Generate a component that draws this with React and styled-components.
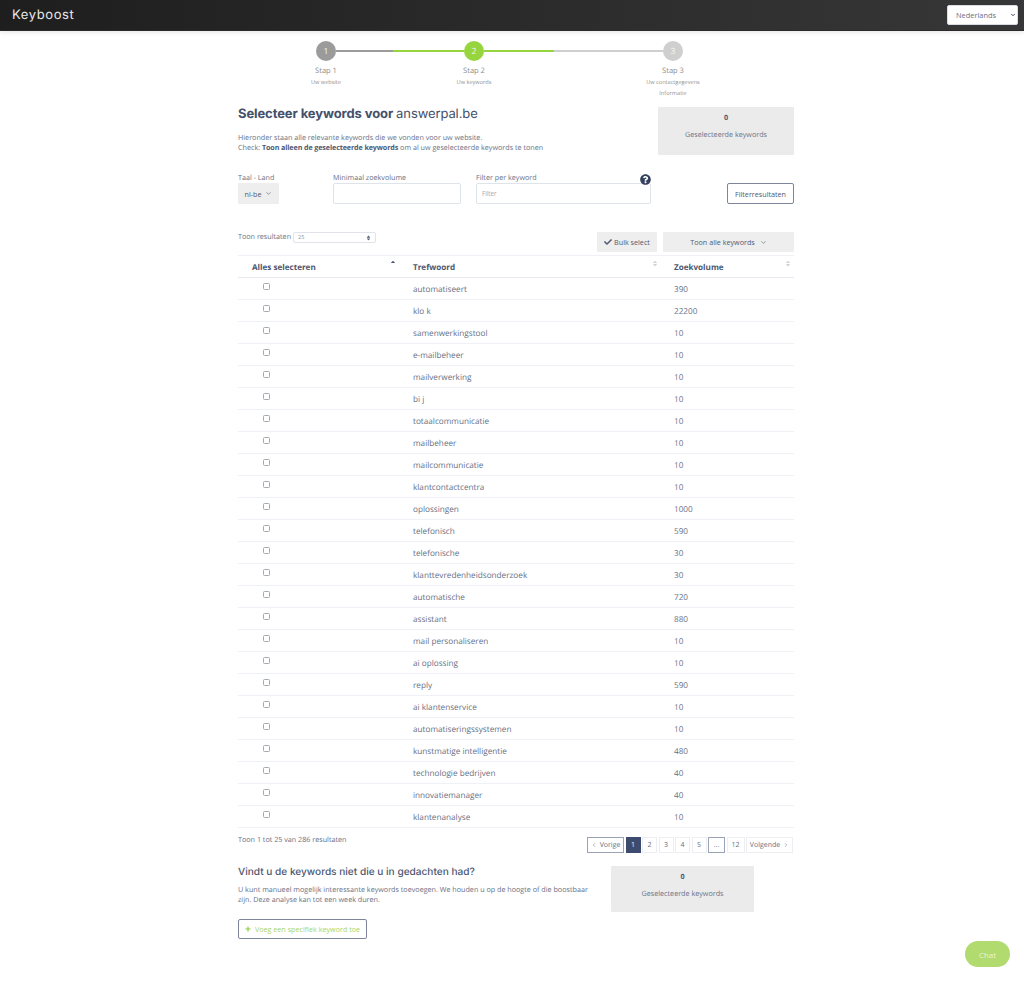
import React from "react";
import styled, { createGlobalStyle } from "styled-components";
import { FaCheck, FaPlus, FaQuestionCircle, FaSort, FaSortUp } from "react-icons/fa";
import { FiChevronDown, FiChevronLeft, FiChevronRight } from "react-icons/fi";

const HEADING = '"Inter", "Noto Sans", sans-serif';

const keywords = [
  ["automatiseert", 390],
  ["klo k", 22200],
  ["samenwerkingstool", 10],
  ["e-mailbeheer", 10],
  ["mailverwerking", 10],
  ["bi j", 10],
  ["totaalcommunicatie", 10],
  ["mailbeheer", 10],
  ["mailcommunicatie", 10],
  ["klantcontactcentra", 10],
  ["oplossingen", 1000],
  ["telefonisch", 590],
  ["telefonische", 30],
  ["klanttevredenheidsonderzoek", 30],
  ["automatische", 720],
  ["assistant", 880],
  ["mail personaliseren", 10],
  ["ai oplossing", 10],
  ["reply", 590],
  ["ai klantenservice", 10],
  ["automatiseringssystemen", 10],
  ["kunstmatige intelligentie", 480],
  ["technologie bedrijven", 40],
  ["innovatiemanager", 40],
  ["klantenanalyse", 10],
];

const GlobalStyle = createGlobalStyle`
  html, body {
    margin: 0;
    background: #fff;
    font-family: "Open Sans", "Noto Sans", sans-serif;
    color: #687085;
    text-rendering: geometricPrecision;
  }
`;

const Page = styled.div`
  min-height: 982px;
  position: relative;
`;

const TopBar = styled.header`
  height: 31px;
  box-sizing: border-box;
  padding: 0 6px 0 12px;
  display: flex;
  align-items: center;
  justify-content: space-between;
  background: linear-gradient(90deg, #1e1e1e, #373737);
  border-bottom: 1px solid #2a2a2a;
  box-shadow: 0 1px 5px rgba(0, 0, 0, 0.12);
`;

const Logo = styled.div`
  font-family: ${HEADING};
  font-size: 13px;
  font-weight: 400;
  letter-spacing: 0.6px;
  color: #e8e8e8;
`;

const LangWrap = styled.div`
  position: relative;
  width: 71px;
  height: 20px;
  svg {
    position: absolute;
    top: 7px;
    right: 2px;
    width: 6px;
    height: 6px;
    stroke-width: 4;
    color: #3d4c6e;
    pointer-events: none;
  }
`;

const LangSelect = styled.select`
  appearance: none;
  display: block;
  width: 100%;
  height: 100%;
  padding: 0 0 0 8px;
  border: 1px solid #d8dce4;
  border-radius: 2px;
  background: #fff;
  color: #667089;
  font-family: inherit;
  font-size: 7.4px;
`;

const Content = styled.main`
  width: 556px;
  margin-left: 238px;
`;

const StepTrack = styled.div`
  display: flex;
  align-items: center;
  margin: 10px 0 0 78px;
`;

const StepCircle = styled.div`
  width: 20px;
  height: 20px;
  flex: none;
  border-radius: 50%;
  display: flex;
  align-items: center;
  justify-content: center;
  background: ${(p) => p.$color};
  color: #f4f4f4;
  font-size: 8.5px;
`;

const StepLine = styled.div`
  height: 2px;
  width: ${(p) => p.$width}px;
  background: ${(p) => p.$color};
`;

const StepLabels = styled.div`
  display: flex;
  margin: 5px 0 0 38px;
  gap: 48px;
`;

const StepLabel = styled.div`
  width: 100px;
  text-align: center;
  margin-right: ${(p) => p.$after || 0}px;
  font-size: 7.5px;
  line-height: 11px;
  color: #8a8a8a;
`;

const StepSub = styled.div`
  font-size: 5.6px;
  line-height: 11px;
  color: #8f8f8f;
`;

const IntroRow = styled.section`
  display: flex;
  justify-content: space-between;
  margin-top: 8px;
`;

const Title = styled.h1`
  margin: 0;
  height: 26px;
  font-family: ${HEADING};
  font-size: 13px;
  line-height: 15px;
  font-weight: 700;
  letter-spacing: -0.1px;
  color: #44506a;
  span {
    font-weight: 400;
  }
`;

const Lead = styled.p`
  margin: 0;
  font-size: 7.2px;
  line-height: 10px;
  color: #687085;
  b {
    font-weight: 700;
    letter-spacing: -0.12px;
    color: #4f5a73;
  }
`;

const CountBox = styled.div`
  width: ${(p) => p.$width}px;
  height: ${(p) => p.$height}px;
  box-sizing: border-box;
  flex: none;
  display: flex;
  flex-direction: column;
  align-items: center;
  gap: 7px;
  padding-top: 6px;
  background: #ebebeb;
  border-radius: 1px;
  font-size: 7.2px;
  line-height: 10px;
  color: #6a7187;
  b {
    color: #4f5a73;
  }
`;

const FilterRow = styled.section`
  display: flex;
  align-items: flex-end;
  margin-top: 19px;
`;

const Field = styled.div`
  display: flex;
  flex-direction: column;
  width: ${(p) => p.$width}px;
  margin-right: ${(p) => p.$gap || 0}px;
  position: relative;
`;

const FieldLabel = styled.div`
  font-size: 7.2px;
  line-height: 9px;
  white-space: nowrap;
  color: #687085;
`;

const GreyButton = styled.button`
  height: ${(p) => p.$height || 20}px;
  width: ${(p) => p.$width}px;
  padding: 0;
  margin-left: ${(p) => p.$left || 0}px;
  flex: none;
  border: 0;
  border-radius: 1px;
  background: #eeeeee;
  display: flex;
  align-items: center;
  justify-content: center;
  gap: ${(p) => p.$gap || 4}px;
  font-family: inherit;
  font-size: 7.2px;
  white-space: nowrap;
  color: #505a72;
  svg {
    flex: none;
  }
`;

const TextInput = styled.input`
  display: block;
  width: 100%;
  height: 21px;
  box-sizing: border-box;
  padding: 0 5px;
  border: 1px solid #dfe3ea;
  border-radius: 2px;
  background: #fff;
  font-family: inherit;
  font-size: 6.2px;
  &::placeholder {
    color: #a3a8b3;
  }
`;

const HelpIcon = styled(FaQuestionCircle)`
  position: absolute;
  top: 0;
  right: 0;
  width: 11px;
  height: 11px;
  color: #33415f;
`;

const OutlineButton = styled.button`
  height: ${(p) => p.$height}px;
  width: ${(p) => p.$width}px;
  margin-left: ${(p) => p.$left || 0}px;
  margin-top: ${(p) => p.$top || 0}px;
  padding: 0;
  box-sizing: border-box;
  flex: none;
  border: 1px solid #7d859a;
  border-radius: 2px;
  background: #fff;
  display: flex;
  align-items: center;
  justify-content: center;
  gap: 4px;
  font-family: inherit;
  font-size: 7.2px;
  white-space: nowrap;
  color: ${(p) => p.$color || "#4f5a73"};
`;

const ToolRow = styled.section`
  display: flex;
  align-items: flex-start;
  margin-top: 28px;
`;

const PageSize = styled.div`
  display: flex;
  align-items: center;
  gap: 2px;
  width: 138px;
  font-size: 7.2px;
  line-height: 11px;
  white-space: nowrap;
`;

const SizeSelect = styled.div`
  flex: 1;
  height: 11px;
  box-sizing: border-box;
  padding: 0 4px;
  display: flex;
  align-items: center;
  justify-content: space-between;
  border: 1px solid #e0e3ea;
  border-radius: 2px;
  font-size: 5.5px;
  color: #8d93a3;
  svg {
    width: 5px;
    height: 6px;
    color: #4f5a73;
  }
`;

const Table = styled.table`
  width: 100%;
  margin-top: 3px;
  border-collapse: collapse;
  table-layout: fixed;
  border-top: 1px solid #eef1f5;
`;

const HeadCell = styled.th`
  position: relative;
  width: ${(p) => p.$width}px;
  height: 22px;
  box-sizing: border-box;
  padding: 1px 0 0 ${(p) => p.$pad}px;
  border-bottom: 1px solid #e6e9ef;
  text-align: left;
  font-size: 8.1px;
  font-weight: 700;
  color: #4c5770;
`;

const SortMark = styled.span`
  position: absolute;
  top: 4px;
  right: ${(p) => p.$right}px;
  width: 6px;
  height: 7px;
  color: ${(p) => (p.$active ? "#4c5770" : "#cfd3da")};
  svg {
    display: block;
    width: 6px;
    height: 7px;
  }
`;

const Row = styled.tr`
  height: 22px;
  border-bottom: 1px solid #eef1f6;
`;

const Cell = styled.td`
  box-sizing: border-box;
  padding: 2px 0 0 ${(p) => p.$pad || 0}px;
  font-size: 8.2px;
  color: #687085;
`;

const Check = styled.input`
  appearance: none;
  display: block;
  width: 7px;
  height: 7px;
  margin: -6px 0 0 0;
  border: 1px solid #a4a8b0;
  border-radius: 1.5px;
  background: #fff;
`;

const TableFoot = styled.section`
  display: flex;
  justify-content: space-between;
  align-items: flex-start;
  margin-top: 7px;
`;

const ResultInfo = styled.div`
  font-size: 7.2px;
  line-height: 11px;
  margin-top: 0;
`;

const Pager = styled.nav`
  display: flex;
  gap: 1.5px;
  margin-top: 2px;
  margin-right: 1px;
`;

const PageLink = styled.a`
  height: 16px;
  width: ${(p) => p.$width}px;
  box-sizing: border-box;
  display: flex;
  align-items: center;
  justify-content: center;
  gap: 3px;
  border: 1px solid ${(p) => (p.$active ? "#3d4c6e" : p.$focus ? "#9aa2b5" : "#eceef2")};
  background: ${(p) => (p.$active ? "#3d4c6e" : "#fff")};
  color: ${(p) => (p.$active ? "#eef0f4" : "#687085")};
  font-size: 7px;
  white-space: nowrap;
  svg {
    width: 6px;
    height: 6px;
  }
`;

const ManualRow = styled.section`
  display: flex;
  justify-content: space-between;
  margin-top: 13px;
  width: 516px;
`;

const ManualText = styled.div`
  width: 354px;
`;

const SubTitle = styled.h2`
  margin: 0 0 7px;
  font-family: ${HEADING};
  font-size: 10.1px;
  line-height: 12px;
  font-weight: 500;
  white-space: nowrap;
  color: #4c5770;
`;

const ChatButton = styled.button`
  position: absolute;
  top: 941px;
  left: 965px;
  width: 45px;
  height: 26px;
  border: 0;
  border-radius: 13px;
  background: #b1da6f;
  color: #e9f5d6;
  font-family: inherit;
  font-size: 8px;
`;

const StepHead = ({ title, children, after }) => (
  <StepLabel $after={after}>
    {title}
    {children}
  </StepLabel>
);

export default function App() {
  return (
    <Page>
      <GlobalStyle />
      <TopBar>
        <Logo>Keyboost</Logo>
        <LangWrap>
          <LangSelect defaultValue="nl">
            <option value="nl">Nederlands</option>
          </LangSelect>
          <FiChevronDown />
        </LangWrap>
      </TopBar>

      <Content>
        <StepTrack>
          <StepCircle $color="#9b9b9b">1</StepCircle>
          <StepLine $width={57} $color="#9b9b9b" />
          <StepLine $width={71} $color="#97d53f" />
          <StepCircle $color="#97d53f">2</StepCircle>
          <StepLine $width={70} $color="#97d53f" />
          <StepLine $width={109} $color="#cfcfcf" />
          <StepCircle $color="#cfcfcf">3</StepCircle>
        </StepTrack>
        <StepLabels>
          <StepHead title="Stap 1">
            <StepSub>Uw website</StepSub>
          </StepHead>
          <StepHead title="Stap 2" after={51}>
            <StepSub>Uw keywords</StepSub>
          </StepHead>
          <StepHead title="Stap 3">
            <StepSub>Uw contactgegevens</StepSub>
            <StepSub>Informatie</StepSub>
          </StepHead>
        </StepLabels>

        <IntroRow>
          <div>
            <Title>
              Selecteer keywords voor <span>answerpal.be</span>
            </Title>
            <Lead>
              Hieronder staan alle relevante keywords die we vonden voor uw website.
              <br />
              Check: <b>Toon alleen de geselecteerde keywords</b> om al uw geselecteerde keywords te tonen
            </Lead>
          </div>
          <CountBox $width={136} $height={48}>
            <b>0</b>
            <span>Geselecteerde keywords</span>
          </CountBox>
        </IntroRow>

        <FilterRow>
          <Field $width={41} $gap={54}>
            <FieldLabel>Taal - Land</FieldLabel>
            <GreyButton $width={41} $height={21}>
              nl-be <FiChevronDown size={7} />
            </GreyButton>
          </Field>
          <Field $width={128} $gap={15}>
            <FieldLabel>Minimaal zoekvolume</FieldLabel>
            <TextInput />
          </Field>
          <Field $width={175}>
            <FieldLabel>Filter per keyword</FieldLabel>
            <HelpIcon />
            <TextInput placeholder="Filter" />
          </Field>
          <OutlineButton $width={67} $height={21} $left={76}>
            Filterresultaten
          </OutlineButton>
        </FilterRow>

        <ToolRow>
          <PageSize>
            Toon resultaten
            <SizeSelect>
              25 <FaSort />
            </SizeSelect>
          </PageSize>
          <GreyButton $width={60} $left={221} $gap={2}>
            <FaCheck size={8} /> Bulk select
          </GreyButton>
          <GreyButton $width={131} $left={6} $gap={5}>
            Toon alle keywords <FiChevronDown size={7} />
          </GreyButton>
        </ToolRow>

        <Table>
          <thead>
            <tr>
              <HeadCell $width={161} $pad={14}>
                Alles selecteren
                <SortMark $right={3} $active>
                  <FaSortUp />
                </SortMark>
              </HeadCell>
              <HeadCell $width={261} $pad={14}>
                Trefwoord
                <SortMark $right={2}>
                  <FaSort />
                </SortMark>
              </HeadCell>
              <HeadCell $pad={14}>
                Zoekvolume
                <SortMark $right={3}>
                  <FaSort />
                </SortMark>
              </HeadCell>
            </tr>
          </thead>
          <tbody>
            {keywords.map(([word, volume]) => (
              <Row key={word}>
                <Cell $pad={25}>
                  <Check type="checkbox" />
                </Cell>
                <Cell $pad={14}>{word}</Cell>
                <Cell $pad={14}>{volume}</Cell>
              </Row>
            ))}
          </tbody>
        </Table>

        <TableFoot>
          <ResultInfo>Toon 1 tot 25 van 286 resultaten</ResultInfo>
          <Pager>
            <PageLink $width={37} $focus>
              <FiChevronLeft /> Vorige
            </PageLink>
            <PageLink $width={15} $active>1</PageLink>
            <PageLink $width={15}>2</PageLink>
            <PageLink $width={15}>3</PageLink>
            <PageLink $width={15}>4</PageLink>
            <PageLink $width={15}>5</PageLink>
            <PageLink $width={17} $focus>...</PageLink>
            <PageLink $width={18}>12</PageLink>
            <PageLink $width={47}>
              Volgende <FiChevronRight />
            </PageLink>
          </Pager>
        </TableFoot>

        <ManualRow>
          <ManualText>
            <SubTitle>Vindt u de keywords niet die u in gedachten had?</SubTitle>
            <Lead>
              U kunt manueel mogelijk interessante keywords toevoegen. We houden u op de hoogte of die boostbaar
              zijn. Deze analyse kan tot een week duren.
            </Lead>
          </ManualText>
          <CountBox $width={143} $height={46}>
            <b>0</b>
            <span>Geselecteerde keywords</span>
          </CountBox>
        </ManualRow>

        <OutlineButton $width={129} $height={20} $top={7} $color="#a6d66a">
          <FaPlus size={6} color="#8ecb3f" /> Voeg een specifiek keyword toe
        </OutlineButton>
      </Content>

      <ChatButton>Chat</ChatButton>
    </Page>
  );
}
